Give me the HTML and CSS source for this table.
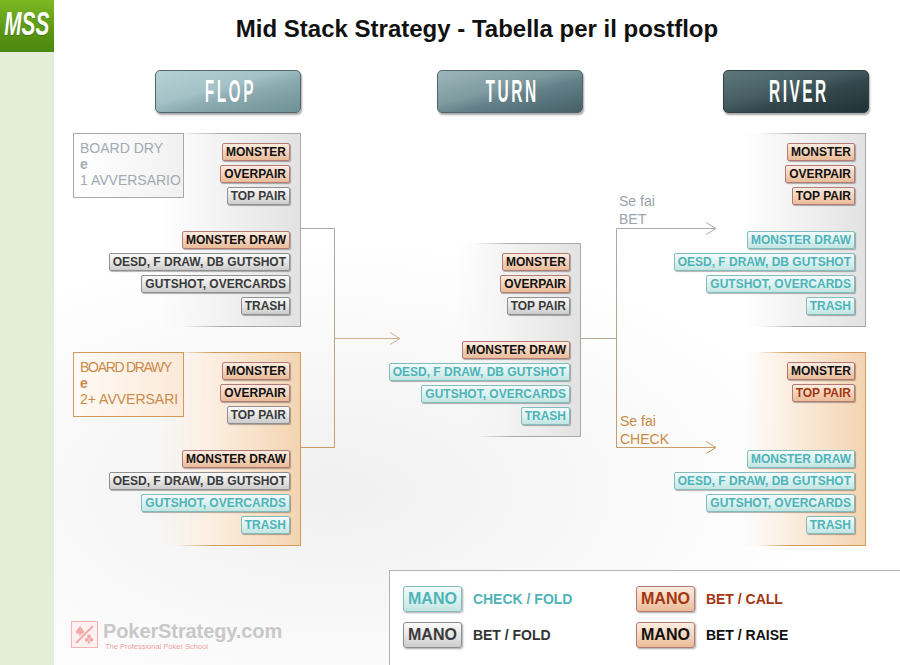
FILE: index.html
```html
<!DOCTYPE html>
<html lang="it">
<head>
<meta charset="utf-8">
<title>Mid Stack Strategy - Tabella per il postflop</title>
<link rel="stylesheet" href="styles.css">
</head>
<body>
<div class="page">
  <aside class="sidebar">
    <div class="mss"><span>MSS</span></div>
  </aside>
  <main class="main">
    <h1 class="title">Mid Stack Strategy - Tabella per il postflop</h1>

    <div class="streets">
      <div class="street flop"><span>FLOP</span></div>
      <div class="street turn"><span>TURN</span></div>
      <div class="street river"><span>RIVER</span></div>
    </div>

    <div class="board">
      <div class="col col-flop">
        <section class="panel gray">
          <div class="tag tag-gray">BOARD DRY<br><b>e</b><br>1 AVVERSARIO</div>
          <div class="stack">
            <div class="grp">
              <span class="b o">MONSTER</span>
              <span class="b o">OVERPAIR</span>
              <span class="b g">TOP PAIR</span>
            </div>
            <div class="grp">
              <span class="b o">MONSTER DRAW</span>
              <span class="b g">OESD, F DRAW, DB GUTSHOT</span>
              <span class="b g">GUTSHOT, OVERCARDS</span>
              <span class="b g">TRASH</span>
            </div>
          </div>
        </section>
        <section class="panel peach">
          <div class="tag tag-orange"><span class="tight">BOARD DRAWY</span><br><b>e</b><br>2+ AVVERSARI</div>
          <div class="stack">
            <div class="grp">
              <span class="b o">MONSTER</span>
              <span class="b o">OVERPAIR</span>
              <span class="b g">TOP PAIR</span>
            </div>
            <div class="grp">
              <span class="b o">MONSTER DRAW</span>
              <span class="b g">OESD, F DRAW, DB GUTSHOT</span>
              <span class="b t">GUTSHOT, OVERCARDS</span>
              <span class="b t">TRASH</span>
            </div>
          </div>
        </section>
      </div>

      <div class="col col-turn">
        <section class="panel gray">
          <div class="stack">
            <div class="grp">
              <span class="b o">MONSTER</span>
              <span class="b o">OVERPAIR</span>
              <span class="b g">TOP PAIR</span>
            </div>
            <div class="grp">
              <span class="b o">MONSTER DRAW</span>
              <span class="b t">OESD, F DRAW, DB GUTSHOT</span>
              <span class="b t">GUTSHOT, OVERCARDS</span>
              <span class="b t">TRASH</span>
            </div>
          </div>
        </section>
      </div>

      <div class="col col-river">
        <section class="panel gray">
          <div class="stack">
            <div class="grp">
              <span class="b o">MONSTER</span>
              <span class="b o">OVERPAIR</span>
              <span class="b o">TOP PAIR</span>
            </div>
            <div class="grp">
              <span class="b t">MONSTER DRAW</span>
              <span class="b t">OESD, F DRAW, DB GUTSHOT</span>
              <span class="b t">GUTSHOT, OVERCARDS</span>
              <span class="b t">TRASH</span>
            </div>
          </div>
        </section>
        <section class="panel peach river-peach">
          <div class="stack">
            <div class="grp">
              <span class="b o">MONSTER</span>
              <span class="b r">TOP PAIR</span>
            </div>
            <div class="grp">
              <span class="b t">MONSTER DRAW</span>
              <span class="b t">OESD, F DRAW, DB GUTSHOT</span>
              <span class="b t">GUTSHOT, OVERCARDS</span>
              <span class="b t">TRASH</span>
            </div>
          </div>
        </section>
      </div>

      <svg class="wires" width="846" height="440" viewBox="0 0 846 440" aria-hidden="true">
        <defs>
          <linearGradient id="gv" gradientUnits="userSpaceOnUse" x1="0" y1="115" x2="0" y2="335">
            <stop offset="0" stop-color="#a9a9a9"/>
            <stop offset="1" stop-color="#c99c66"/>
          </linearGradient>
        </defs>
        <g fill="none" stroke-width="1">
          <path d="M247 115.5 H280.5 V334.5 H247" stroke="url(#gv)"/>
          <path d="M280.5 225.5 H346" stroke="#cdb195"/>
          <polyline points="336,219.5 346,225.5 336,231.5" stroke="#cdb195"/>
          <path d="M527 225.5 H562.5" stroke="#b8a690"/>
          <path d="M562.5 115.5 V334.5" stroke="url(#gv)"/>
          <path d="M562.5 115.5 H662" stroke="#a9a9a9"/>
          <polyline points="652,109.5 662,115.5 652,121.5" stroke="#a9a9a9"/>
          <path d="M562.5 334.5 H662" stroke="#c99c66"/>
          <polyline points="652,328.5 662,334.5 652,340.5" stroke="#c99c66"/>
        </g>
      </svg>
      <div class="cond cond-bet">Se fai<br>BET</div>
      <div class="cond cond-check">Se fai<br>CHECK</div>
    </div>

    <div class="footer">
      <div class="ps-logo">
        <svg class="ps-icon" width="27" height="27" viewBox="0 0 27 27" aria-hidden="true">
          <rect x="0.5" y="0.5" width="26" height="26" fill="#fdf0f0" stroke="#f1b3b3"/>
          <path d="M5 22 L22 5" stroke="#f1a9a9" stroke-width="2"/>
          <path d="M9 5 C11 8 13 9 13 11 C13 13 10.5 13.5 9.5 12 L10.5 14.5 H7.5 L8.5 12 C7.5 13.5 5 13 5 11 C5 9 7 8 9 5 Z" fill="#f1a9a9"/>
          <circle cx="18" cy="15.5" r="2" fill="#f1a9a9"/>
          <circle cx="15.8" cy="18.8" r="2" fill="#f1a9a9"/>
          <circle cx="20.2" cy="18.8" r="2" fill="#f1a9a9"/>
          <path d="M18 18 L19.3 22.5 H16.7 Z" fill="#f1a9a9"/>
        </svg>
        <div class="ps-text">
          <div class="ps-name">PokerStrategy.com</div>
          <div class="ps-sub">The Professional Poker School</div>
        </div>
      </div>
      <div class="legend">
        <div class="item"><span class="b mano t">MANO</span><span class="lbl lbl-t">CHECK / FOLD</span></div>
        <div class="item"><span class="b mano r">MANO</span><span class="lbl lbl-r">BET / CALL</span></div>
        <div class="item"><span class="b mano g">MANO</span><span class="lbl lbl-g">BET / FOLD</span></div>
        <div class="item"><span class="b mano o">MANO</span><span class="lbl lbl-o">BET / RAISE</span></div>
      </div>
    </div>
  </main>
</div>
</body>
</html>
```

FILE: styles.css
```css
html, body {
  margin: 0;
  padding: 0;
}
body {
  width: 900px;
  height: 665px;
  overflow: hidden;
  background: #fff;
  font-family: "Liberation Sans", Arial, sans-serif;
}
.page {
  display: flex;
  height: 665px;
}

/* sidebar */
.sidebar {
  width: 54px;
  flex: none;
  background: #e4edd7;
}
.mss {
  height: 52px;
  box-sizing: border-box;
  padding-bottom: 5px;
  background: linear-gradient(#7db823, #5a9614 60%, #4c880e);
  display: flex;
  align-items: center;
  justify-content: center;
}
.mss span {
  display: inline-block;
  font: italic bold 33px/33px "Liberation Sans", sans-serif;
  color: #fff;
  transform: scaleX(0.63);
  text-shadow: 0 1px 1px rgba(0, 0, 0, 0.25);
}

/* main */
.main {
  position: relative;
  width: 846px;
  flex: none;
  background:
    radial-gradient(ellipse 58% 38% at 33% 74%, #f0f0f0 0%, rgba(255,255,255,0) 100%),
    #fff;
}
.title {
  margin: 16px 0 0;
  text-align: center;
  font: bold 24px/26px "Liberation Sans", sans-serif;
  color: #111;
}

/* street headers */
.streets {
  display: flex;
  margin-top: 28px;
}
.street {
  width: 146px;
  height: 43px;
  box-sizing: border-box;
  border-radius: 5px;
  border: 1px solid #51666a;
  box-shadow: 1px 2px 2px rgba(0, 0, 0, 0.35);
  display: flex;
  align-items: center;
  justify-content: center;
}
.street span {
  display: inline-block;
  font: bold 31px/31px "Liberation Sans", sans-serif;
  letter-spacing: 5px;
  margin-right: -5px;
  color: #fff;
  transform: scaleX(0.5);
  text-shadow: 0 0 1px rgba(0, 0, 0, 0.2);
}
.flop {
  margin-left: 101px;
  background: linear-gradient(165deg, #b8d2d6 0%, #a3c1c6 42%, #8aabb0 58%, #6e9196 100%);
}
.turn {
  margin-left: 136px;
  background: linear-gradient(165deg, #9db6bb 0%, #7f9ba0 42%, #64818a 58%, #465f65 100%);
}
.river {
  margin-left: 140px;
  background: linear-gradient(165deg, #5e787c 0%, #465e62 42%, #34494d 58%, #213136 100%);
  border-color: #2e3e42;
}

/* board */
.board {
  position: relative;
  display: flex;
  align-items: center;
  padding-top: 20px;
}
.col {
  display: flex;
  flex-direction: column;
  gap: 25px;
}
.col-flop {
  margin-left: 19px;
  width: 228px;
}
.col-turn {
  margin-left: 80px;
  width: 200px;
}
.col-river {
  margin-left: 85px;
  width: 200px;
}

.panel {
  display: grid;
  height: 194px;
  box-sizing: border-box;
  border-style: solid;
  border-width: 1px 1px 1px 0;
}
.panel > * {
  grid-area: 1 / 1;
}
.panel.gray {
  background: linear-gradient(to right, rgba(255,255,255,0) 38%, #f4f4f4 62%, #e2e2e2 100%);
  border-image: linear-gradient(to right, rgba(168,168,168,0) 48%, #a9a9a9 66%) 1;
}
.panel.peach {
  background: linear-gradient(to right, rgba(255,255,255,0) 38%, #fcefe2 60%, #f3d4b1 100%);
  border-image: linear-gradient(to right, rgba(210,155,92,0) 46%, #d29b5c 62%) 1;
}

.stack {
  display: flex;
  flex-direction: column;
  justify-content: space-between;
  align-items: flex-end;
  padding: 9px 10px 11px 0;
}
.grp {
  display: flex;
  flex-direction: column;
  align-items: flex-end;
  gap: 4px;
}

.tag {
  justify-self: start;
  align-self: start;
  margin-top: -1px;
  width: 111px;
  height: 65px;
  box-sizing: border-box;
  padding: 6px 0 0 6px;
  font: 14px/16px "Liberation Sans", sans-serif;
  white-space: nowrap;
  border: 1px solid;
}
.tight {
  letter-spacing: -1.3px;
}
.tag-gray {
  color: #a2aab2;
  border-color: #a9a9a9;
  background: linear-gradient(to right, #fff, #f1f1f1);
}
.tag-orange {
  color: #c98b4a;
  border-color: #d19a5b;
  background: linear-gradient(to right, #fffaf5, #fbe9d8);
}

/* hand buttons */
.b {
  display: block;
  height: 18px;
  box-sizing: border-box;
  padding: 0 3px;
  font: bold 12px/16px "Liberation Sans", sans-serif;
  border: 1px solid;
  border-radius: 2px;
  box-shadow: 1px 1px 1px rgba(0, 0, 0, 0.3);
  white-space: nowrap;
}
.o {
  color: #111;
  border-color: #b47a78;
  background: linear-gradient(#fcece0, #f4d2b8 55%, #e9bc98);
}
.r {
  color: #a33612;
  border-color: #b47a78;
  background: linear-gradient(#fcece0, #f4d2b8 55%, #e9bc98);
}
.g {
  color: #3a3a3a;
  border-color: #8f8f8f;
  background: linear-gradient(#fafafa, #e4e4e4 55%, #cccccc);
}
.t {
  color: #4fb3b8;
  border-color: #83bcbc;
  background: linear-gradient(#f3fbfb, #daf1ef 55%, #c2e5e2);
}

/* condition labels */
.wires {
  position: absolute;
  left: 0;
  top: 0;
}
.cond {
  position: absolute;
  left: 565px;
  font: 14px/18px "Liberation Sans", sans-serif;
}
.cond-bet {
  top: 79px;
  color: #9aa2aa;
}
.cond-check {
  top: 299px;
  left: 566px;
  color: #c98a42;
}

/* footer */
.footer {
  display: flex;
  margin-top: 24px;
  height: 95px;
}
.ps-logo {
  display: flex;
  align-items: flex-start;
  gap: 5px;
  margin: 51px 0 0 17px;
}
.ps-icon {
  display: block;
}
.ps-name {
  font: bold 20px/21px "Liberation Sans", sans-serif;
  letter-spacing: -0.1px;
  color: #c8c8c8;
}
.ps-sub {
  margin: 1px 0 0 2px;
  font: 7.5px/8px "Liberation Sans", sans-serif;
  color: #f0a2a2;
}

.legend {
  margin-left: auto;
  width: 511px;
  box-sizing: border-box;
  border-top: 1px solid #b3b3b3;
  border-left: 1px solid #b3b3b3;
  background: #fff;
  padding: 15px 0 0 13px;
  display: grid;
  grid-template-columns: 233px auto;
  grid-auto-rows: 26px;
  row-gap: 10px;
  align-content: start;
}
.item {
  display: flex;
  align-items: center;
  gap: 11px;
}
.b.mano {
  height: 26px;
  padding: 0 4px;
  font: bold 16px/24px "Liberation Sans", sans-serif;
  border-radius: 3px;
  box-shadow: 1px 1px 2px rgba(0, 0, 0, 0.35);
}
.lbl {
  font: bold 14px/16px "Liberation Sans", sans-serif;
}
.lbl-t { color: #4fb3b8; }
.lbl-r { color: #a33612; }
.lbl-g { color: #333; }
.lbl-o { color: #111; }
```
